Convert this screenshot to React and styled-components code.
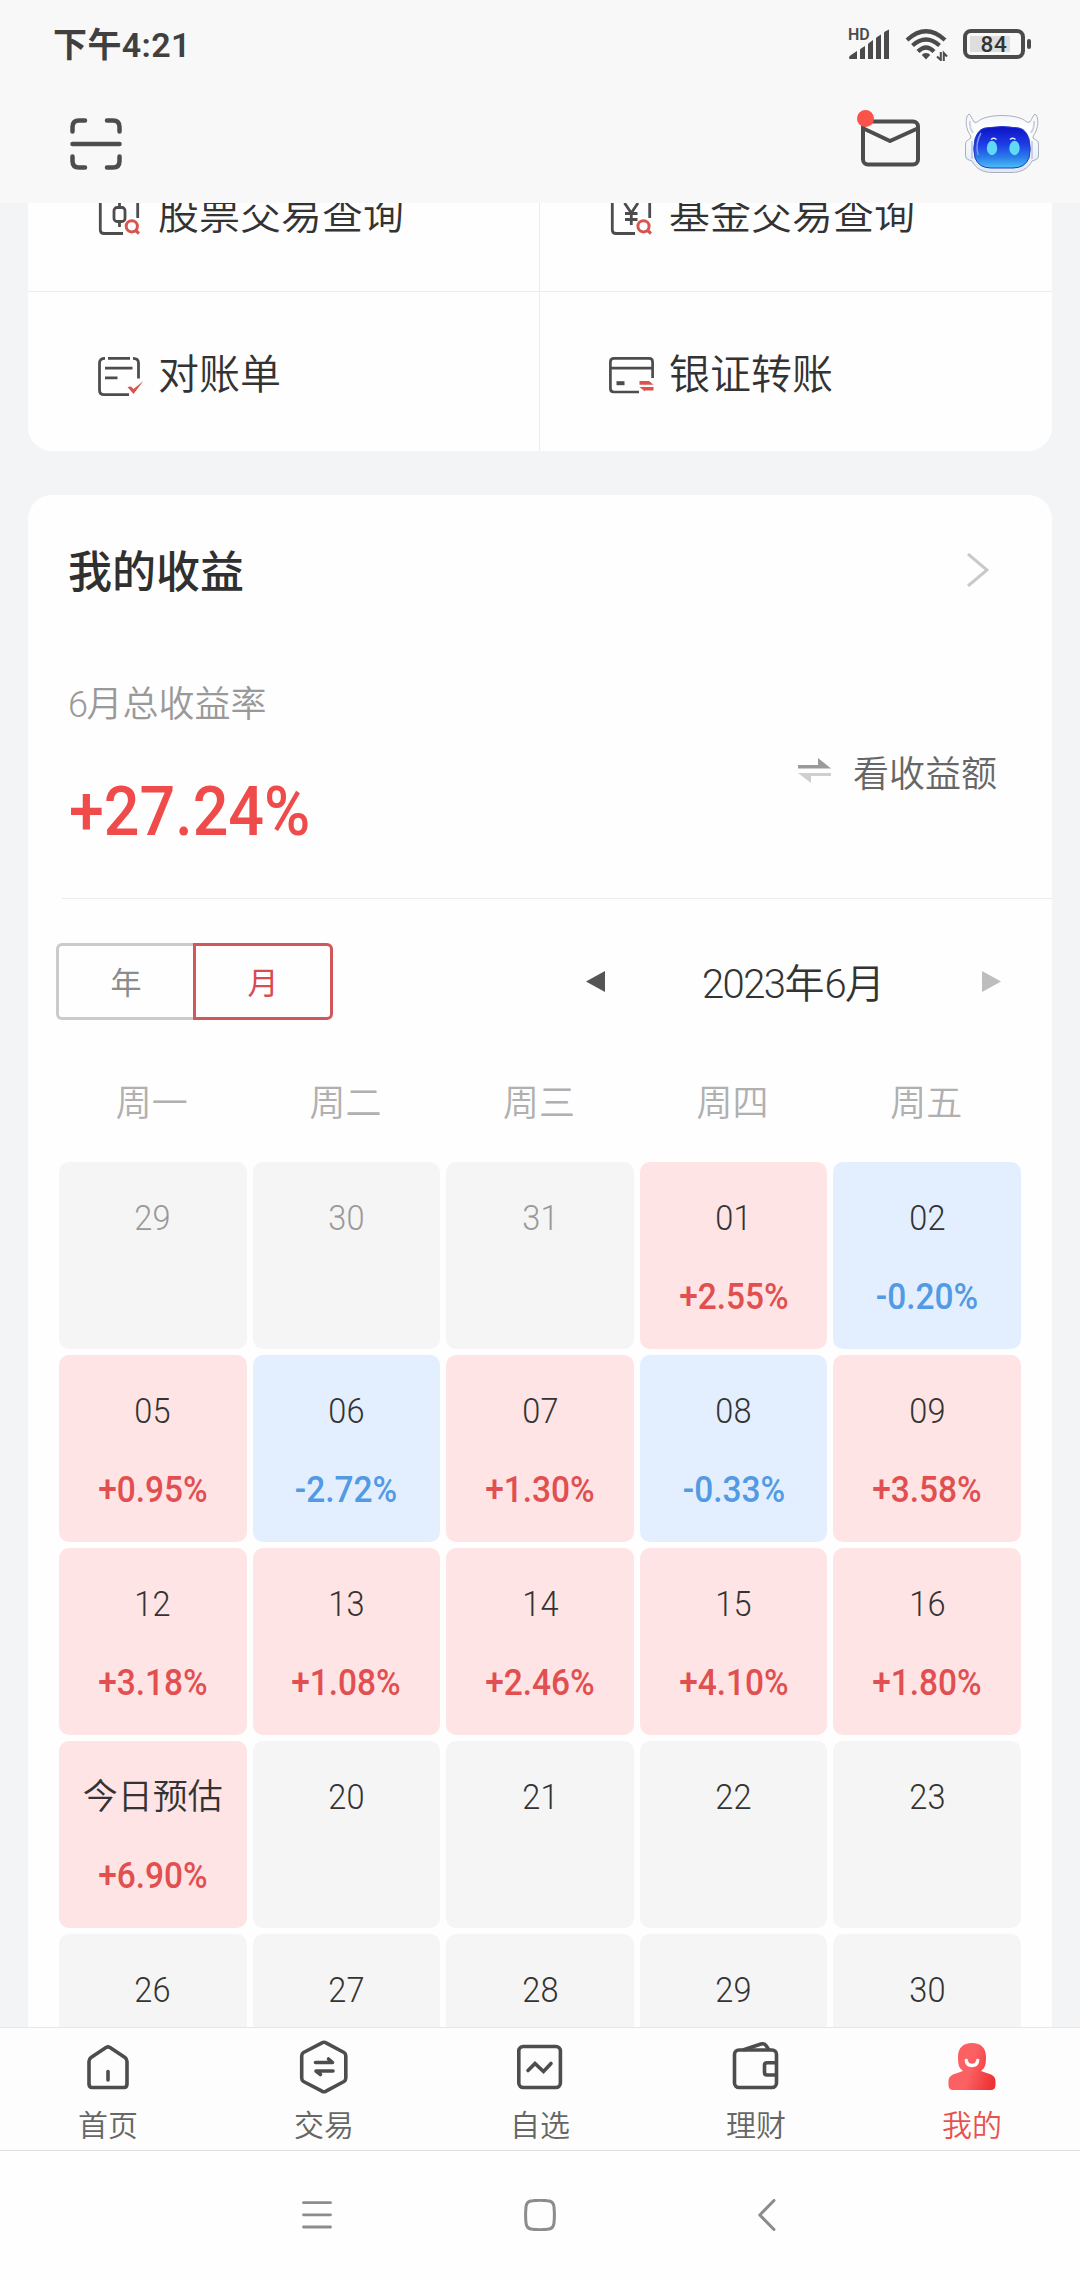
import styled, { createGlobalStyle } from 'styled-components';

const weekdays = ['周一', '周二', '周三', '周四', '周五'];

const days = [
  { label: '29', muted: true },
  { label: '30', muted: true },
  { label: '31', muted: true },
  { label: '01', value: '+2.55%' },
  { label: '02', value: '-0.20%' },
  { label: '05', value: '+0.95%' },
  { label: '06', value: '-2.72%' },
  { label: '07', value: '+1.30%' },
  { label: '08', value: '-0.33%' },
  { label: '09', value: '+3.58%' },
  { label: '12', value: '+3.18%' },
  { label: '13', value: '+1.08%' },
  { label: '14', value: '+2.46%' },
  { label: '15', value: '+4.10%' },
  { label: '16', value: '+1.80%' },
  { label: '今日预估', value: '+6.90%', today: true },
  { label: '20' },
  { label: '21' },
  { label: '22' },
  { label: '23' },
  { label: '26' },
  { label: '27' },
  { label: '28' },
  { label: '29' },
  { label: '30' },
];

const services = [
  { label: '股票交易查询', icon: <StockIcon /> },
  { label: '基金交易查询', icon: <FundIcon /> },
  { label: '对账单', icon: <BillIcon /> },
  { label: '银证转账', icon: <TransferIcon /> },
];

const tabs = [
  { label: '首页', icon: <HomeIcon /> },
  { label: '交易', icon: <TradeIcon /> },
  { label: '自选', icon: <WatchIcon /> },
  { label: '理财', icon: <WalletIcon /> },
  { label: '我的', icon: <MeIcon />, active: true },
];

function getTone(value) {
  if (!value) return 'none';
  return value.startsWith('-') ? 'down' : 'up';
}

export default function App() {
  return (
    <StyledScreen>
      <GlobalStyle />
      <StyledHeader>
        <StyledStatusBar>
          <StyledTime>下午4:21</StyledTime>
          <StyledStatusIcons>
            <SignalIcon />
            <WifiIcon />
            <StyledBattery>
              <StyledBatteryBody>
                <StyledBatteryLevel>84</StyledBatteryLevel>
              </StyledBatteryBody>
              <StyledBatteryNub />
            </StyledBattery>
          </StyledStatusIcons>
        </StyledStatusBar>
        <StyledToolbar>
          <ScanIcon />
          <StyledToolbarActions>
            <StyledMail>
              <MailIcon />
              <StyledMailDot />
            </StyledMail>
            <RobotIcon />
          </StyledToolbarActions>
        </StyledToolbar>
      </StyledHeader>

      <StyledContent>
        <StyledServices>
          {services.map((item) => (
            <StyledService key={item.label}>
              {item.icon}
              <StyledServiceName>{item.label}</StyledServiceName>
            </StyledService>
          ))}
        </StyledServices>

        <StyledProfitCard>
          <StyledCardHeader>
            <StyledCardTitle>我的收益</StyledCardTitle>
            <svg width="22" height="34" viewBox="0 0 22 34" fill="none" stroke="#c9c9c9" strokeWidth="3">
              <path d="M1 1 L20 17 L1 33" />
            </svg>
          </StyledCardHeader>

          <StyledSummary>
            <div>
              <StyledSummaryLabel><StyledDigits>6</StyledDigits>月总收益率</StyledSummaryLabel>
              <StyledSummaryRate>+27.24%</StyledSummaryRate>
            </div>
            <StyledSwitchAmount>
              <svg width="33" height="26" viewBox="0 0 33 26">
                <path d="M0 7 H20 V0 L33 10.500 H0 Z" fill="#9a9a9a" />
                <path d="M33 15 H0 L13 25 V18 H33 Z" fill="#cfcfcf" />
              </svg>
              看收益额
            </StyledSwitchAmount>
          </StyledSummary>

          <StyledControls>
            <StyledToggle>
              <StyledToggleItem>年</StyledToggleItem>
              <StyledToggleItem $active>月</StyledToggleItem>
            </StyledToggle>
            <StyledMonthPicker>
              <svg width="19" height="21" viewBox="0 0 19 21"><path d="M0 10.5 L19 0 V21 Z" fill="#555" /></svg>
              <StyledMonth>
                <StyledDigits>2023</StyledDigits>年<StyledDigits>6</StyledDigits>月
              </StyledMonth>
              <svg width="19" height="21" viewBox="0 0 19 21"><path d="M19 10.5 L0 0 V21 Z" fill="#bdbdbd" /></svg>
            </StyledMonthPicker>
          </StyledControls>

          <StyledWeekdays>
            {weekdays.map((name) => (
              <span key={name}>{name}</span>
            ))}
          </StyledWeekdays>
          <StyledCalendar>
            {days.map((day, index) => (
              <StyledDay key={index} $tone={getTone(day.value)}>
                <StyledDayLabel $muted={day.muted} $today={day.today}>{day.label}</StyledDayLabel>
                {day.value && <StyledDayValue $tone={getTone(day.value)}>{day.value}</StyledDayValue>}
              </StyledDay>
            ))}
          </StyledCalendar>
        </StyledProfitCard>
      </StyledContent>

      <StyledTabBar>
        {tabs.map((tab) => (
          <StyledTab key={tab.label} $active={tab.active}>
            {tab.icon}
            <span>{tab.label}</span>
          </StyledTab>
        ))}
      </StyledTabBar>

      <StyledSystemNav>
        <svg width="30" height="32" viewBox="0 0 30 32" stroke="#8c8c8c" strokeWidth="2.800" strokeLinecap="round">
          <path d="M1.5 3.7 H28.5 M1.5 15.8 H28.5 M1.5 28 H28.5" />
        </svg>
        <svg width="32" height="32" viewBox="0 0 32 32" fill="none" stroke="#8c8c8c" strokeWidth="3">
          <path d="M8.500 1.700 Q16 1 23.500 1.700 Q29.500 2 30 8 Q30.800 16 30 24 Q29.500 29.800 23.500 30.300 Q16 31 8.500 30.300 Q2.500 29.800 2 24 Q1.200 16 2 8 Q2.500 2 8.500 1.700 Z" />
        </svg>
        <svg width="18" height="32" viewBox="0 0 18 32" fill="none" stroke="#8c8c8c" strokeWidth="3" strokeLinecap="round" strokeLinejoin="round">
          <path d="M16 1.5 L1.8 16 L16 30.5" />
        </svg>
      </StyledSystemNav>
    </StyledScreen>
  );
}

function SignalIcon() {
  return (
    <svg width="42" height="40" viewBox="0 -3 42 40" fill="#4b4b4b">
      <text x="0" y="12.500" fontFamily="Roboto, sans-serif" fontWeight="600" fontSize="16">HD</text>
      <path d="M1 31 Q1 29 3 28 L9 24 V32 H2 Q1 32 1 31 Z" />
      <path d="M12 32 V23 Q12 22 13 21.4 L17 19 V32 Z" />
      <path d="M20 32 V17.5 Q20 16.500 21 16 L25 13 V32 Z" />
      <path d="M28 32 V11.500 Q28 10.500 29 10 L33 7.500 V32 Z" />
      <path d="M36 32 V6 Q36 5 37 4.400 L41 2.500 V32 Z" />
    </svg>
  );
}

function WifiIcon() {
  return (
    <svg width="43" height="34" viewBox="0 0 43 34" fill="none" stroke="#4b4b4b" strokeWidth="4.2">
      <path d="M2 13 Q21 -4.500 40 13" />
      <path d="M7.500 18.500 Q21 6.500 34.500 18.500" />
      <path d="M13 24.500 Q21 16.500 29 24.500" />
      <path d="M21 26 Q24 26 25.200 28 L21 32.500 L16.800 28 Q18 26 21 26 Z" fill="#4b4b4b" stroke="none" />
      <path d="M35.800 25 V33 L32 29.500 M38.800 34 V26 L42 29.500" strokeWidth="2" />
    </svg>
  );
}

function ScanIcon() {
  return (
    <svg width="52" height="52" viewBox="0 0 52 52" fill="none" stroke="#4d4d4d" strokeWidth="4.500" strokeLinecap="round">
      <path d="M2.500 13.500 V9 Q2.500 2.500 9 2.500 H15" />
      <path d="M37 2.500 H43 Q49.500 2.500 49.500 9 V13.500" />
      <path d="M2.500 38.500 V43 Q2.500 49.500 9 49.500 H15" />
      <path d="M37 49.500 H43 Q49.500 49.500 49.500 43 V38.500" />
      <path d="M2.500 26 H49.500" />
    </svg>
  );
}

function MailIcon() {
  return (
    <svg width="59" height="48" viewBox="0 0 59 48" fill="none" stroke="#4d4d4d" strokeWidth="4" strokeLinejoin="round">
      <rect x="2" y="2.500" width="55" height="43" rx="5" />
      <path d="M2.500 9.500 L29 22 L56.500 9.500" />
    </svg>
  );
}

function RobotIcon() {
  return (
    <svg width="74" height="61" viewBox="0 0 74 61">
      <defs>
        <linearGradient id="face" x1="0" y1="0" x2="0" y2="1">
          <stop offset="0" stopColor="#0b12c4" />
          <stop offset="0.45" stopColor="#1f3fe6" />
          <stop offset="0.75" stopColor="#2b7fea" />
          <stop offset="1" stopColor="#4cc0f6" />
        </linearGradient>
        <linearGradient id="helmet" x1="0" y1="0" x2="0" y2="1">
          <stop offset="0" stopColor="#f2f4f9" />
          <stop offset="0.25" stopColor="#ffffff" />
          <stop offset="1" stopColor="#dfe9f7" />
        </linearGradient>
      </defs>
      <path
        d="M4 1 C1 3 0 10 3 18 C4 21 6 22 6 25 L3 27 Q0.500 28 0.500 31 V43 Q0.500 46 4 47 L7 48 C11 56 18 59.500 28 59.500 H46 C56 59.500 63 56 67 48 L70 47 Q73.500 46 73.500 43 V31 Q73.500 28 71 27 L68 25 C68 22 70 21 71 18 C74 10 73 3 70 1 C68 2 67 6 65 9 Q63 10 61 8.500 C53 0.500 21 0.500 13 8.500 Q11 10 9 9 C7 6 6 2 4 1 Z"
        fill="url(#helmet)"
        stroke="#a9b0bc"
        strokeWidth="1"
      />
      <path d="M7 28 V46 M67 28 V46" stroke="#bcc6d6" strokeWidth="1.500" />
      <path d="M5 8 Q4 14 8 20 M69 8 Q70 14 66 20" stroke="#cdd4e0" strokeWidth="2" fill="none" />
      <path d="M20 15 Q37 12 54 15 Q61 16.500 64 26 Q66.500 36 64 45 Q60 55 48 55 H26 Q14 55 10 45 Q7.500 36 10 26 Q13 16.500 20 15 Z" fill="url(#face)" stroke="#2338c9" strokeWidth="1" />
      <path d="M13 42 Q10 30 16 20" stroke="#7f93f2" strokeWidth="1.500" fill="none" />
      <ellipse cx="27" cy="35" rx="5.200" ry="7.200" fill="#5fd9f5" />
      <ellipse cx="49.500" cy="35" rx="5.200" ry="7.200" fill="#5fd9f5" />
      <path d="M26 26.500 Q29 24 31.500 26.500 M45 26.500 Q48 24 50.500 26.500" stroke="#dfe9ff" strokeWidth="1.600" fill="none" />
    </svg>
  );
}

function StockIcon() {
  return (
    <svg width="46" height="40" viewBox="0 0 46 40" fill="none" stroke="#4d4d4d" strokeWidth="2.800">
      <path d="M25 37.500 H6 Q2.300 37.500 2.300 34 V5 Q2.300 1.500 6 1.500 H36 Q39.700 1.500 39.700 5 V22" />
      <rect x="16" y="11.500" width="11" height="14" rx="3" />
      <path d="M21.500 7 V12 M21.500 25.500 V31" />
      <g stroke="#d9534f" strokeWidth="3"><circle cx="33.800" cy="30.300" r="5.600" /><path d="M37 34 L41 37.500" /></g>
    </svg>
  );
}

function FundIcon() {
  return (
    <svg width="46" height="40" viewBox="0 0 46 40" fill="none" stroke="#4d4d4d" strokeWidth="2.800">
      <path d="M26 37.500 H7 Q3.300 37.500 3.300 34 V5 Q3.300 1.500 7 1.500 H37 Q40.700 1.500 40.700 5 V22" />
      <path d="M15.500 7 L22.300 17 L29 7 M22.300 17 V29 M16 17.500 H28.500 M16 23.500 H28.500" />
      <g stroke="#d9534f" strokeWidth="3"><circle cx="34.500" cy="30.300" r="5.600" /><path d="M38 34 L42 37.500" /></g>
    </svg>
  );
}

function BillIcon() {
  return (
    <svg width="46" height="40" viewBox="0 0 46 40" fill="none" stroke="#4d4d4d" strokeWidth="2.800">
      <path d="M7 1.400 Q1.500 1.400 1.500 6 V33 Q1.500 37.600 6 37.600 H31" />
      <path d="M10 1.400 H32" />
      <path d="M35 1.400 Q40.500 1.400 40.500 6 V21.500" />
      <path d="M7 11.200 H34.500 M7 20.800 H19.500" />
      <path d="M29.500 30 L33 29.500 L35.500 32 L45.500 24 Q40 31 35.500 37 Z" fill="#d9534f" stroke="none" />
    </svg>
  );
}

function TransferIcon() {
  return (
    <svg width="46" height="40" viewBox="0 0 46 40" fill="none" stroke="#4d4d4d" strokeWidth="2.700">
      <path d="M30 35 H5 Q1.400 35 1.400 31.500 V5 Q1.400 1.400 5 1.400 H40 Q43.600 1.400 43.600 5 V21" />
      <path d="M1.400 11.200 H43.600" />
      <path d="M7.500 26.200 H15.500" strokeWidth="4" />
      <path d="M30.500 24 H40 L44.500 27.800 H30.500 Z M44.500 30 H30.500 L36 34.500 V33.500 H44.500 Z" fill="#d9534f" stroke="none" />
    </svg>
  );
}

function HomeIcon() {
  return (
    <svg width="54" height="54" viewBox="0 0 54 54" fill="none" stroke="#4d4d4d" strokeWidth="3.600" strokeLinejoin="round" strokeLinecap="round">
      <path d="M25 7.600 Q27 6 29 7.600 L44 17.500 Q46 19 46 21.500 V44 Q46 47.500 43 47.500 H11 Q8 47.500 8 44 V21.500 Q8 19 10 17.500 Z" />
      <path d="M27 31.500 V40" />
    </svg>
  );
}

function TradeIcon() {
  return (
    <svg width="54" height="54" viewBox="0 0 54 54" fill="none" stroke="#4d4d4d" strokeWidth="3.600" strokeLinejoin="round" strokeLinecap="round">
      <path d="M25 2.800 Q27 1.600 29 2.800 L47 12.500 Q48.800 13.600 48.800 16 V38 Q48.800 40.400 47 41.500 L29 51.200 Q27 52.400 25 51.200 L6.500 41.500 Q4.700 40.400 4.700 38 V16 Q4.700 13.600 6.500 12.500 Z" />
      <path d="M18.500 22.500 H35.500 L31.500 19 M36 31 H19 L23.500 34.500" strokeWidth="3.600" />
    </svg>
  );
}

function WatchIcon() {
  return (
    <svg width="54" height="54" viewBox="0 0 54 54" fill="none" stroke="#4d4d4d" strokeWidth="3.600" strokeLinejoin="round" strokeLinecap="round">
      <rect x="5.800" y="6.500" width="41.600" height="41" rx="4.500" />
      <path d="M15 30.500 L22 23.500 L30.500 31.500 L38 23.500" strokeLinejoin="miter" />
    </svg>
  );
}

function WalletIcon() {
  return (
    <svg width="54" height="54" viewBox="0 0 54 54" fill="none" stroke="#4d4d4d" strokeWidth="3.600" strokeLinejoin="round">
      <rect x="5.500" y="10" width="42" height="37.500" rx="4.500" />
      <path d="M14 10 L32 4 Q35 3 37 5.500 L40 10" />
      <path d="M47 22.800 H38 Q35.500 22.800 35.500 25 V32.500 Q35.500 35 38 35 H47" />
    </svg>
  );
}

function MeIcon() {
  return (
    <svg width="54" height="54" viewBox="0 0 54 54">
      <defs>
        <linearGradient id="me" x1="0" y1="0.3" x2="1" y2="0.6">
          <stop offset="0.5" stopColor="#fb6063" />
          <stop offset="1" stopColor="#ee3335" />
        </linearGradient>
      </defs>
      <path
        d="M27 3 C36 3 41 8 41 17 C41 25 40 28 36 31 L46 34.500 Q50.500 36.500 50.500 41 V45 Q50.500 50 46 50 H8 Q3.500 50 3.500 45 V41 Q3.500 36.500 8 34.500 L18 31 C14 28 13 25 13 17 C13 8 18 3 27 3 Z"
        fill="url(#me)"
      />
      <path d="M21.300 20.500 Q22 25.500 27 25.500 Q32 25.500 32.700 20.500" fill="none" stroke="#fff" strokeWidth="3.300" strokeLinecap="round" />
    </svg>
  );
}

const GlobalStyle = createGlobalStyle`
  * {
    box-sizing: border-box;
  }
  body {
    margin: 0;
    font-family: Roboto, 'Noto Sans CJK SC', sans-serif;
    font-weight: 350;
    color: #333;
  }
  svg {
    display: block;
    flex-shrink: 0;
  }
`;
const StyledScreen = styled.div`
  width: 1080px;
  height: 2280px;
  display: flex;
  flex-direction: column;
  overflow: hidden;
  background-color: #f3f4f6;
`;
const StyledHeader = styled.header`
  height: 203px;
  flex-shrink: 0;
  background-color: #f8f8f8;
`;
const StyledStatusBar = styled.div`
  height: 88px;
  display: flex;
  justify-content: space-between;
  align-items: center;
  padding: 0 49px 0 53px;
`;
const StyledTime = styled.div`
  padding-top: 2px;
  font-size: 34px;
  font-weight: 600;
  line-height: 40px;
  letter-spacing: 0.4px;
  color: #404040;
`;
const StyledStatusIcons = styled.div`
  display: flex;
  align-items: center;
  gap: 15px;
`;
const StyledBattery = styled.div`
  display: flex;
  align-items: center;
  gap: 2px;
`;
const StyledBatteryBody = styled.div`
  width: 62px;
  height: 30px;
  border: 4px solid #4b4b4b;
  border-radius: 8px;
  padding: 3px;
`;
const StyledBatteryLevel = styled.div`
  height: 16px;
  line-height: 17px;
  text-align: center;
  font-size: 22.5px;
  font-weight: 500;
  color: #333;
  letter-spacing: 0.8px;
  background: linear-gradient(90deg, #dedede 84%, transparent 84%);
`;
const StyledBatteryNub = styled.div`
  width: 4px;
  height: 10px;
  border-radius: 2px;
  background-color: #4b4b4b;
`;
const StyledToolbar = styled.div`
  height: 111px;
  display: flex;
  justify-content: space-between;
  align-items: center;
  padding: 0 41px 0 70px;
`;
const StyledToolbarActions = styled.div`
  display: flex;
  align-items: center;
  gap: 45px;
`;
const StyledMail = styled.div`
  position: relative;
  top: -1px;
`;
const StyledMailDot = styled.span`
  position: absolute;
  top: -9px;
  left: -4px;
  width: 17px;
  height: 17px;
  border-radius: 50%;
  background-color: #fb5249;
`;
const StyledContent = styled.main`
  flex: 1;
  min-height: 0;
  overflow: hidden;
  padding: 0 28px;
`;
/* the list is scrolled, so the first row slides under the header */
const StyledServices = styled.section`
  margin-top: -72px;
  display: grid;
  grid-template-columns: 512px 512px;
  grid-auto-rows: 160px;
  overflow: hidden;
  background-color: #fefefe;
  border-radius: 24px;
`;
const StyledService = styled.div`
  display: flex;
  align-items: center;
  gap: 14px;
  padding: 10px 0 0 70px;
  &:nth-child(odd) {
    border-right: 1px solid #ececec;
  }
  &:nth-child(n + 3) {
    border-top: 1px solid #ececec;
  }
  &:nth-child(even) {
    padding-left: 69px;
  }
`;
const StyledServiceName = styled.span`
  font-size: 41px;
  line-height: 48px;
  margin-top: -3px;
`;
const StyledProfitCard = styled.section`
  margin-top: 44px;
  height: 1700px;
  background-color: #fefefe;
  border-radius: 24px 24px 0 0;
`;
const StyledCardHeader = styled.div`
  height: 150px;
  display: flex;
  justify-content: space-between;
  align-items: center;
  padding: 0 63px 0 40px;
`;
const StyledCardTitle = styled.h2`
  margin: 0;
  padding-top: 6px;
  font-size: 44px;
  line-height: 52px;
  font-weight: 500;
  color: #303030;
`;
const StyledSummary = styled.div`
  height: 254px;
  margin-left: 34px;
  padding: 38px 55px 0 6px;
  display: flex;
  justify-content: space-between;
  border-bottom: 1px solid #ebebeb;
`;
const StyledDigits = styled.span`
  font-weight: 350;
  letter-spacing: -0.04em;
`;
const StyledSummaryLabel = styled.div`
  font-size: 36px;
  line-height: 44px;
  color: #999;
`;
const StyledSummaryRate = styled.div`
  margin: 45px 0 0 1px;
  font-size: 69px;
  line-height: 80px;
  font-weight: 500;
  color: #ef4b4a;
  transform: scaleX(0.91);
  transform-origin: left;
`;
const StyledSwitchAmount = styled.div`
  height: 44px;
  margin-top: 66px;
  display: flex;
  align-items: center;
  gap: 22px;
  font-size: 36px;
  color: #666;
`;
const StyledControls = styled.div`
  display: flex;
  justify-content: space-between;
  align-items: center;
  padding: 44px 51px 0 28px;
`;
const StyledToggle = styled.div`
  display: flex;
`;
const StyledToggleItem = styled.div`
  width: ${(props) => (props.$active ? '140px' : '137px')};
  height: 77px;
  display: flex;
  justify-content: center;
  align-items: center;
  padding-bottom: 3px;
  border: 3px solid ${(props) => (props.$active ? '#d2575b' : '#cbcbcb')};
  border-radius: ${(props) => (props.$active ? '0 6px 6px 0' : '6px 0 0 6px')};
  ${(props) => !props.$active && 'border-right: none;'}
  font-size: 31px;
  font-weight: 400;
  color: ${(props) => (props.$active ? '#d94a52' : '#8c8c8c')};
`;
const StyledMonthPicker = styled.div`
  width: 415px;
  display: flex;
  justify-content: space-between;
  align-items: center;
`;
const StyledMonth = styled.div`
  padding-top: 7px;
  font-size: 40px;
  line-height: 48px;
`;
const StyledWeekdays = styled.div`
  display: grid;
  grid-template-columns: repeat(5, 1fr);
  column-gap: 6px;
  margin: 62px 32px 0 30px;
  height: 80px;
  text-align: center;
  font-size: 36px;
  line-height: 44px;
  color: #b0b0b0;
`;
const StyledCalendar = styled.div`
  display: grid;
  grid-template-columns: repeat(5, 1fr);
  grid-auto-rows: 187px;
  gap: 6px;
  margin: 0 31px;
`;
const tones = {
  up: { background: '#fee4e4', text: '#e14f51' },
  down: { background: '#e3effe', text: '#539ae4' },
  none: { background: '#f5f5f5', text: '#333' },
};
const StyledDay = styled.div`
  display: flex;
  flex-direction: column;
  align-items: center;
  padding-top: 37px;
  gap: 37px;
  border-radius: 10px;
  background-color: ${(props) => tones[props.$tone].background};
`;
const StyledDayLabel = styled.div`
  font-size: 35px;
  line-height: 40px;
  color: ${(props) => (props.$muted ? '#999' : '#333')};
  transform: ${(props) => (props.$today ? 'none' : 'scaleX(0.93)')};
`;
const StyledDayValue = styled.div`
  font-size: 36px;
  line-height: 42px;
  font-weight: 500;
  color: ${(props) => tones[props.$tone].text};
  transform: scaleX(0.93);
`;
const StyledTabBar = styled.nav`
  height: 124px;
  flex-shrink: 0;
  display: grid;
  grid-template-columns: repeat(5, 1fr);
  background-color: #fdfdfd;
  border-top: 1px solid #e6e6e8;
  border-bottom: 1px solid #e0e0e0;
`;
const StyledTab = styled.div`
  display: flex;
  flex-direction: column;
  align-items: center;
  gap: 14px;
  padding-top: 12px;
  font-size: 30px;
  line-height: 36px;
  color: ${(props) => (props.$active ? '#e8524d' : '#666')};
`;
const StyledSystemNav = styled.div`
  height: 129px;
  flex-shrink: 0;
  display: grid;
  grid-template-columns: 222px 234px 18px;
  align-items: center;
  padding: 0 0 1px 302px;
  background-color: #fefefe;
`;
